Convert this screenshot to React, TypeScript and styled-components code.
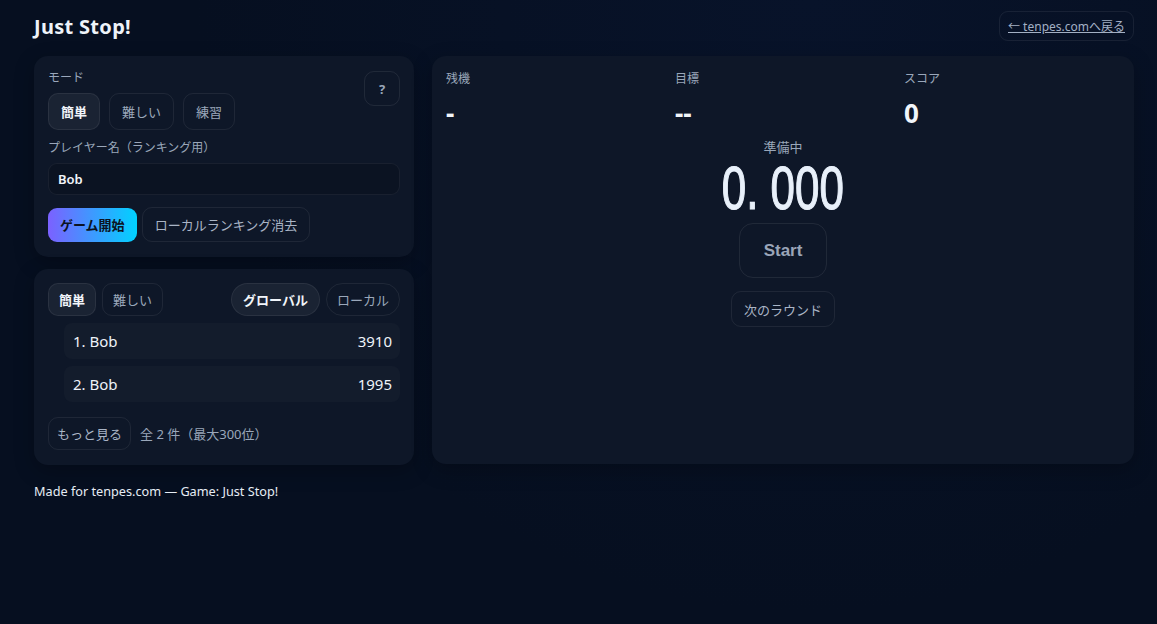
import React from 'react';
import styled, { createGlobalStyle } from 'styled-components';

const GlobalStyle = createGlobalStyle`
  html, body {
    margin: 0;
    padding: 0;
    background: #060f20;
    color: #e6edf5;
    font-family: "Noto Sans", "Noto Sans CJK JP", sans-serif;
  }
  * { box-sizing: border-box; }
`

const Page = styled.div`
  min-height: 624px;
  padding: 11px 23px 0 34px;
  background: radial-gradient(circle at 70% 0%, #08132a 0%, #060f20 60%);
`

const Header = styled.header`
  display: flex;
  justify-content: space-between;
  align-items: center;
  height: 30px;
  margin-bottom: 15px;
`

const Title = styled.h1`
  margin: 0;
  font-size: 20px;
  font-weight: 700;
  letter-spacing: 0.3px;
  color: #eef3f9;
`

const BackLink = styled.a`
  display: inline-flex;
  align-items: center;
  height: 30px;
  padding: 0 8px;
  border: 1px solid rgba(255, 255, 255, 0.07);
  border-radius: 9px;
  font-size: 12px;
  color: #a3b0c4;
  text-decoration: underline;
`

const Layout = styled.div`
  display: grid;
  grid-template-columns: 380px 702px;
  gap: 18px;
  align-items: start;
`

const Column = styled.div`
  display: flex;
  flex-direction: column;
  gap: 12px;
`

const Card = styled.section<{ height?: string }>`
  background: #0e1728;
  border-radius: 14px;
  padding: 14px;
  height: ${({ height }): string => (height ? height : 'auto')};
  box-shadow: 0 6px 20px rgba(0, 0, 0, 0.25);
`

const Label = styled.div`
  font-size: 12px;
  color: #9aa7ba;
  line-height: 16px;
`

const TopRow = styled.div`
  display: flex;
  justify-content: space-between;
  align-items: flex-start;
`

const Row = styled.div<{ gap?: string }>`
  display: flex;
  align-items: center;
  gap: ${({ gap }): string => (gap ? gap : '9px')};
`

const Chip = styled.button<{ active?: boolean; h?: string; pill?: boolean; pad?: string }>`
  height: ${({ h }): string => (h ? h : '37px')};
  padding: 0 ${({ pad }): string => (pad ? pad : '12px')};
  border-radius: ${({ pill }): string => (pill ? '18px' : '10px')};
  border: 1px solid rgba(255, 255, 255, 0.07);
  background: ${({ active }): string => (active ? '#1a2333' : 'transparent')};
  color: ${({ active }): string => (active ? '#f1f5fa' : '#9aa7ba')};
  font-family: inherit;
  font-size: 13px;
  font-weight: ${({ active }): number => (active ? 700 : 400)};
  cursor: pointer;
`

const HelpButton = styled.button`
  width: 36px;
  height: 35px;
  margin-top: 1px;
  border-radius: 10px;
  border: 1px solid rgba(255, 255, 255, 0.08);
  background: transparent;
  color: #9aa7ba;
  font-family: inherit;
  font-size: 13px;
  font-weight: 700;
`

const ModeBlock = styled.div`
  display: flex;
  flex-direction: column;
  gap: 7px;
`

const NameLabel = styled(Label)`
  margin-top: 10px;
  margin-bottom: 7px;
`

const Input = styled.input`
  width: 100%;
  height: 32px;
  padding: 0 9px;
  border-radius: 9px;
  border: 1px solid rgba(255, 255, 255, 0.06);
  background: #0b1322;
  color: #f1f5fa;
  font-family: inherit;
  font-size: 13px;
  font-weight: 600;
  outline: none;
`

const Actions = styled(Row)`
  margin-top: 12px;
  gap: 5px;
`

const PrimaryButton = styled.button`
  height: 34px;
  padding: 0 12px;
  border: none;
  border-radius: 9px;
  background: linear-gradient(90deg, #7b61ff, #00d2ff);
  color: #0b1322;
  font-family: inherit;
  font-size: 13px;
  font-weight: 700;
`

const GhostButton = styled.button<{ h?: string; pad?: string }>`
  height: ${({ h }): string => (h ? h : '36px')};
  padding: 0 ${({ pad }): string => (pad ? pad : '12px')};
  border-radius: 10px;
  border: 1px solid rgba(255, 255, 255, 0.07);
  background: transparent;
  color: #aab5c6;
  font-family: inherit;
  font-size: 13px;
`

const TabsBar = styled.div`
  display: flex;
  justify-content: space-between;
  margin-bottom: 7px;
`

const List = styled.ol`
  list-style: none;
  margin: 0 0 0 16px;
  padding: 0;
  display: flex;
  flex-direction: column;
  gap: 7px;
`

const Entry = styled.li`
  display: flex;
  justify-content: space-between;
  align-items: center;
  height: 36px;
  padding: 0 8px 0 9px;
  border-radius: 8px;
  background: #131c2c;
  font-size: 15px;
  color: #eef3f9;
`

const Footer = styled(Row)`
  margin-top: 15px;
`

const Count = styled.span`
  font-size: 13px;
  color: #9aa7ba;
`

const Stats = styled.div`
  display: grid;
  grid-template-columns: repeat(3, 1fr);
  gap: 13px;
  padding-top: 1px;
`

const Stat = styled.div`
  display: flex;
  flex-direction: column;
  gap: 8px;
`

const StatValue = styled.div`
  font-size: 26px;
  font-weight: 700;
  line-height: 36px;
  color: #f1f5fa;
`

const Stage = styled.div`
  display: flex;
  flex-direction: column;
  align-items: center;
  margin-top: 7px;
`

const Status = styled.div`
  font-size: 13px;
  color: #9aa7ba;
  line-height: 18px;
`

const Timer = styled.div`
  font-family: "Liberation Sans", Arial, sans-serif;
  font-size: 61px;
  line-height: 61px;
  height: 61px;
  margin-top: 2px;
  color: #e8f0fa;
  -webkit-text-stroke: 1.2px #e8f0fa;
  transform: scaleX(0.72);
  white-space: pre;
`

const StartButton = styled.button`
  width: 88px;
  height: 55px;
  margin-top: 4px;
  border-radius: 14px;
  border: 1px solid rgba(255, 255, 255, 0.08);
  background: transparent;
  color: #9aa5b8;
  font-family: "Liberation Sans", Arial, sans-serif;
  font-size: 17px;
  font-weight: 700;
`

const NextButton = styled(GhostButton)`
  margin-top: 13px;
`

const Credit = styled.p`
  margin: 17px 0 0;
  font-size: 12.7px;
  color: #e6edf5;
`

const ranking = [
  { name: 'Bob', score: 3910 },
  { name: 'Bob', score: 1995 },
]

export default function App(): JSX.Element {
  return (
    <Page>
      <GlobalStyle />
      <Header>
        <Title>Just Stop!</Title>
        <BackLink href="#">← tenpes.comへ戻る</BackLink>
      </Header>
      <Layout>
        <Column>
          <Card height="201px">
            <TopRow>
              <ModeBlock>
                <Label>モード</Label>
                <Row>
                  <Chip active>簡単</Chip>
                  <Chip>難しい</Chip>
                  <Chip>練習</Chip>
                </Row>
              </ModeBlock>
              <HelpButton>?</HelpButton>
            </TopRow>
            <NameLabel>プレイヤー名（ランキング用）</NameLabel>
            <Input defaultValue="Bob" />
            <Actions>
              <PrimaryButton>ゲーム開始</PrimaryButton>
              <GhostButton h="35px">ローカルランキング消去</GhostButton>
            </Actions>
          </Card>
          <Card height="196px">
            <TabsBar>
              <Row gap="6px">
                <Chip active h="33px" pad="10px">簡単</Chip>
                <Chip h="33px" pad="10px">難しい</Chip>
              </Row>
              <Row gap="6px">
                <Chip active pill h="33px" pad="11px">グローバル</Chip>
                <Chip pill h="33px" pad="10px">ローカル</Chip>
              </Row>
            </TabsBar>
            <List>
              {ranking.map((r, i) => (
                <Entry key={i}>
                  <span>{i + 1}. {r.name}</span>
                  <span>{r.score}</span>
                </Entry>
              ))}
            </List>
            <Footer>
              <GhostButton h="33px" pad="8px">もっと見る</GhostButton>
              <Count>全 2 件（最大300位）</Count>
            </Footer>
          </Card>
        </Column>
        <Card height="408px">
          <Stats>
            <Stat>
              <Label>残機</Label>
              <StatValue>-</StatValue>
            </Stat>
            <Stat>
              <Label>目標</Label>
              <StatValue>--</StatValue>
            </Stat>
            <Stat>
              <Label>スコア</Label>
              <StatValue>0</StatValue>
            </Stat>
          </Stats>
          <Stage>
            <Status>準備中</Status>
            <Timer>0. 000</Timer>
            <StartButton>Start</StartButton>
            <NextButton>次のラウンド</NextButton>
          </Stage>
        </Card>
      </Layout>
      <Credit>Made for tenpes.com — Game: Just Stop!</Credit>
    </Page>
  )
}
